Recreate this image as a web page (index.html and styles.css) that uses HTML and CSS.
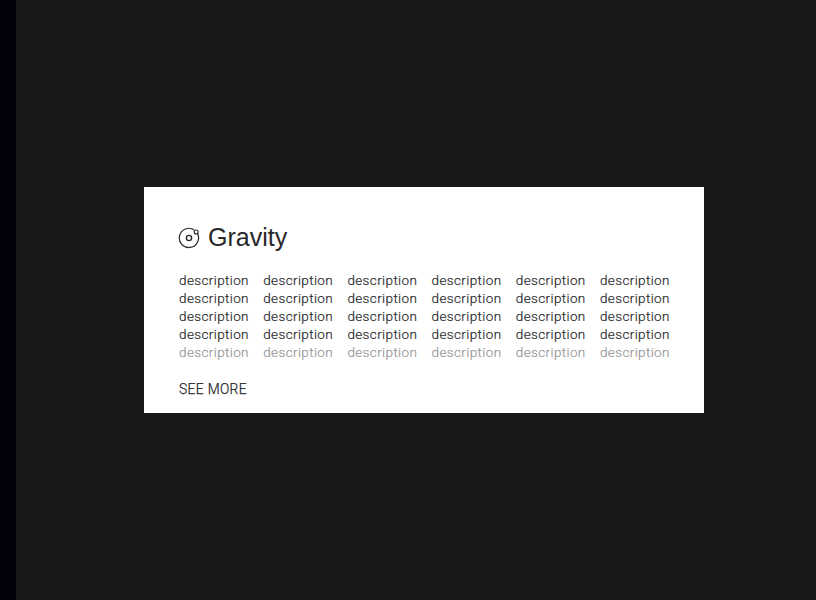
FILE: index.html
```html
<!DOCTYPE html>
<html lang="en">
<head>
<meta charset="utf-8">
<title>Gravity</title>
<link rel="stylesheet" href="styles.css">
</head>
<body>
<main class="stage">
  <article class="card">
    <header class="heading">
      <svg class="icon" viewBox="0 0 22 22" fill="none" stroke="currentColor" stroke-width="1.2" aria-hidden="true">
        <path d="M16.2 2.9A9.6 9.6 0 1 0 19.5 6.6"/>
        <circle cx="11" cy="11" r="2.6" stroke-width="1.4"/>
        <circle cx="18.2" cy="5" r="2" stroke-width="1.1"/>
      </svg>
      <h1 class="title">Gravity</h1>
    </header>
    <div class="rows">
      <p class="row"><span>description</span><span>description</span><span>description</span><span>description</span><span>description</span><span>description</span></p>
      <p class="row"><span>description</span><span>description</span><span>description</span><span>description</span><span>description</span><span>description</span></p>
      <p class="row"><span>description</span><span>description</span><span>description</span><span>description</span><span>description</span><span>description</span></p>
      <p class="row"><span>description</span><span>description</span><span>description</span><span>description</span><span>description</span><span>description</span></p>
      <p class="row faded"><span>description</span><span>description</span><span>description</span><span>description</span><span>description</span><span>description</span></p>
    </div>
    <div class="more">SEE MORE</div>
  </article>
</main>
</body>
</html>
```

FILE: styles.css
```css
* { box-sizing: border-box; }
body {
  margin: 0;
  height: 100vh;
  padding-left: 16px;
  background: #020008;
  color: #28282a;
  font-family: Roboto, sans-serif;
  font-weight: 300;
}
.stage {
  height: 100%;
  display: flex;
  align-items: center;
  justify-content: center;
  padding-left: 16px;
  background: #18181a;
}
.card {
  width: 560px;
  height: 226px;
  padding: 35px 34px 0 35px;
  background: #fff;
}
.heading {
  display: flex;
  align-items: center;
  height: 32px;
}
.icon { width: 22px; height: 22px; margin-left: -1px; flex: none; }
.title {
  margin: 0 0 2px 8px;
  font: 400 25px/30px "Liberation Sans", sans-serif;
}
.rows { margin-top: 17px; }
.row {
  display: grid;
  grid-template-columns: repeat(6, 84.2px);
  margin: 0;
  font-size: 13.5px;
  line-height: 18px;
  letter-spacing: 0.38px;
  -webkit-text-stroke: 0.2px currentColor;
}
.faded { color: #98989a; }
.more {
  margin-top: 19px;
  font-size: 13.8px;
  line-height: 18px;
  letter-spacing: 0.35px;
  -webkit-text-stroke: 0.25px currentColor;
}
```
